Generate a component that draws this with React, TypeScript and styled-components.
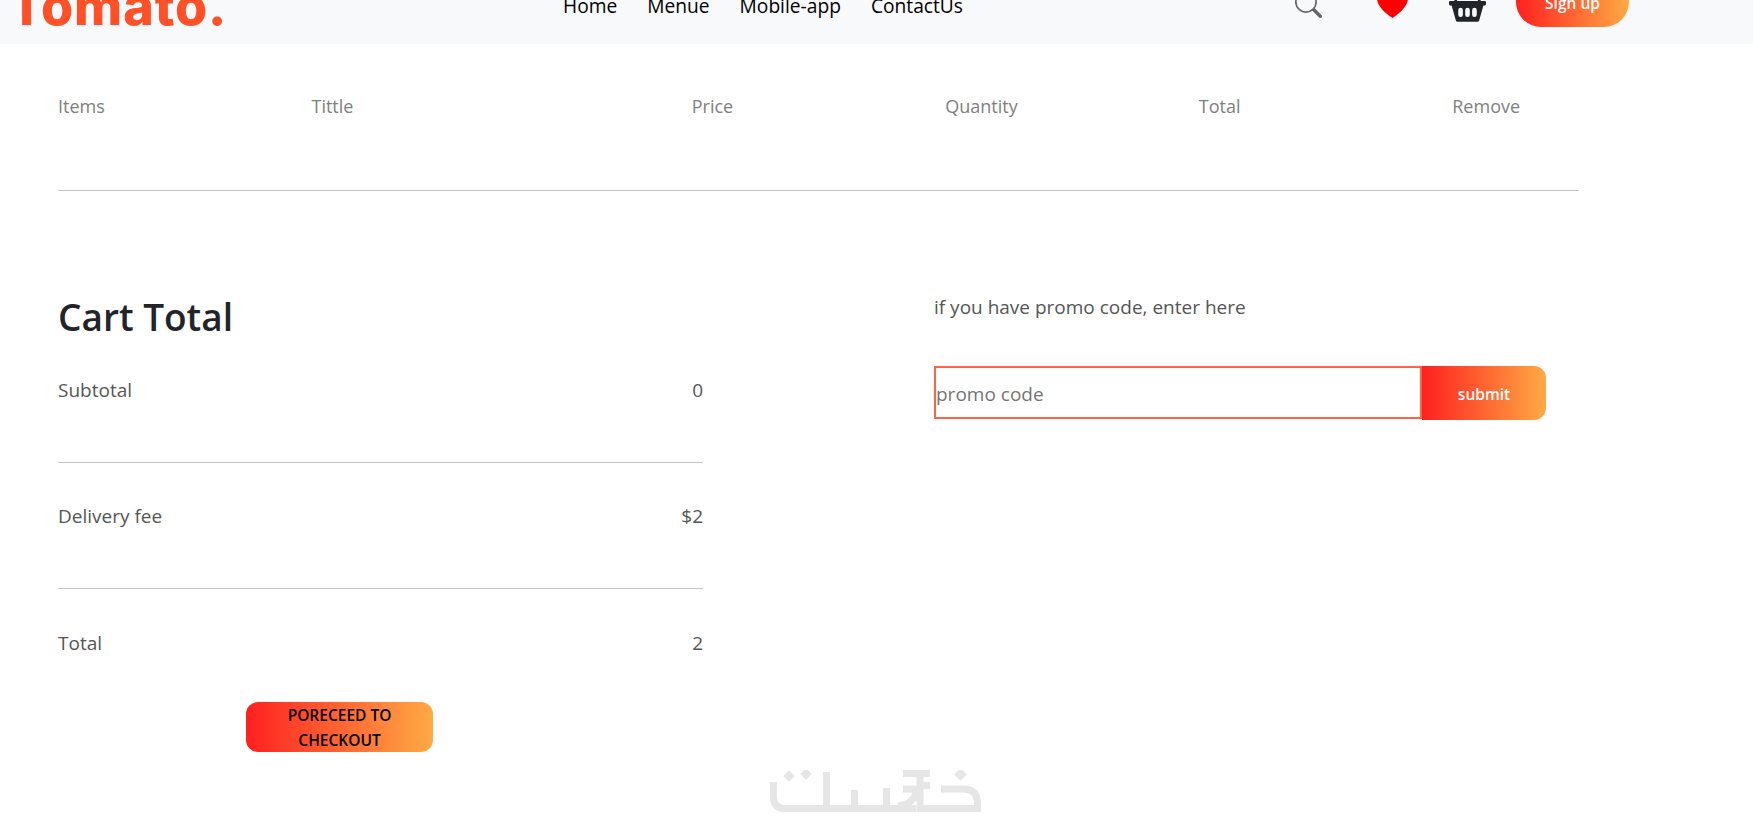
import React from "react";
import styled, { createGlobalStyle } from "styled-components";
import { BsSearch, BsHeartFill, BsBasket2Fill } from "react-icons/bs";

const Global = createGlobalStyle`
  html, body { margin: 0; padding: 0; background: #fff; }
  body { font-family: "Open Sans", "Noto Sans", sans-serif; height: 829px; overflow: hidden; position: relative; }
  * { box-sizing: border-box; }
`;

const grad = "linear-gradient(90deg, #ff2020, #ffaa44)";

const Nav = styled.nav`
  height: 44px;
  background: #f8f9fa;
  overflow: hidden;
  display: flex;
  align-items: flex-end;
  padding-left: 9px;
`;
const Logo = styled.div`
  width: 529px;
  font-family: "Inter", sans-serif;
  font-weight: 800;
  font-size: 52px;
  line-height: 52px;
  letter-spacing: 0.9px;
  color: #ff5027;
  margin-bottom: 11px;
`;
const Links = styled.div`
  display: flex;
  gap: 30px;
  width: 732px;
  margin-left: 25px;
  margin-bottom: 26px;
`;
const NavLink = styled.a`
  font-size: 19.2px;
  line-height: 24px;
  color: #000;
  white-space: nowrap;
`;
const IconSlot = styled.span<{ $w: number; $b: number; $c: string }>`
  display: flex;
  width: ${(p) => p.$w}px;
  margin-bottom: ${(p) => p.$b}px;
  color: ${(p) => p.$c};
`;
const SignUp = styled.button`
  width: 113px;
  height: 52px;
  margin-bottom: 17px;
  border: 0;
  border-radius: 25px;
  background: ${grad};
  color: #fff;
  font-family: inherit;
  font-weight: 600;
  font-size: 15.5px;
  padding: 4px 0 0;
  line-height: 20px;
`;

const Main = styled.main`
  padding: 0 0 0 58px;
  width: 1579px;
`;
const HeadRow = styled.div`
  display: grid;
  grid-template-columns: 1fr 1.5fr 1fr 1fr 1fr 0.5fr;
  padding-top: 50px;
  height: 147px;
  border-bottom: 1px solid #c4c4c4;
  color: #808080;
  font-size: 18px;
  line-height: 24px;
`;
const Bottom = styled.div`
  display: flex;
  margin-top: 104px;
`;
const Left = styled.section`
  width: 645px;
  margin-right: 231px;
`;
const Title = styled.h2`
  margin: 0;
  font-size: 37px;
  line-height: 44px;
  font-weight: 600;
  color: #212529;
`;
const Row = styled.div`
  display: flex;
  justify-content: space-between;
  font-size: 19px;
  line-height: 24px;
  color: #555;
  margin-top: 39px;
`;
const Rule = styled.hr`
  border: 0;
  border-top: 1px solid #c4c4c4;
  margin: 60px 0 0;
`;
const TotalRow = styled(Row)`
  margin-top: 42px;
`;
const DeliveryRow = styled(Row)`
  margin-top: 41px;
`;
const Checkout = styled.button`
  display: block;
  width: 187px;
  height: 50px;
  margin: 47px 0 0 188px;
  border: 0;
  border-radius: 12px;
  background: ${grad};
  color: #000;
  font-family: inherit;
  font-size: 15.5px;
  font-weight: 600;
  line-height: 25px;
  padding: 1px 20px 0;
`;
const Right = styled.section`
  flex: 0 0 612px;
`;
const PromoText = styled.p`
  margin: 0;
  font-size: 19px;
  line-height: 24px;
  color: #555;
`;
const PromoForm = styled.div`
  display: flex;
  align-items: flex-start;
  margin-top: 47px;
`;
const PromoInput = styled.input`
  width: 488px;
  height: 53px;
  border: 2px solid #ff6347;
  outline: 0;
  padding: 2px 0 0;
  font-family: inherit;
  font-size: 19px;
  background: #fff;
  &::placeholder { color: #757575; }
`;
const Submit = styled.button`
  width: 124px;
  height: 54px;
  border: 0;
  border-radius: 0 12px 12px 0;
  background: ${grad};
  color: #fff;
  font-family: inherit;
  font-size: 15.5px;
  font-weight: 600;
  padding: 2px 0 0;
`;
const Watermark = styled.svg`
  position: absolute;
  left: 770px;
  top: 770px;
`;

export default function App() {
  return (
    <>
      <Global />
      <Nav>
        <Logo>Tomato.</Logo>
        <Links>
          <NavLink>Home</NavLink>
          <NavLink>Menue</NavLink>
          <NavLink>Mobile-app</NavLink>
          <NavLink>ContactUs</NavLink>
        </Links>
        <IconSlot $w={82} $b={26} $c="#666"><BsSearch size={27} /></IconSlot>
        <IconSlot $w={72} $b={24} $c="#ff0000"><BsHeartFill size={31} /></IconSlot>
        <IconSlot $w={67} $b={20} $c="#212529"><BsBasket2Fill size={37} /></IconSlot>
        <SignUp>Sign up</SignUp>
      </Nav>
      <Main>
        <HeadRow>
          <span>Items</span>
          <span>Tittle</span>
          <span>Price</span>
          <span>Quantity</span>
          <span>Total</span>
          <span>Remove</span>
        </HeadRow>
        <Bottom>
          <Left>
            <Title>Cart Total</Title>
            <Row><span>Subtotal</span><span>0</span></Row>
            <Rule />
            <DeliveryRow><span>Delivery fee</span><span>$2</span></DeliveryRow>
            <Rule />
            <TotalRow><span>Total</span><span>2</span></TotalRow>
            <Checkout>PORECEED TO CHECKOUT</Checkout>
          </Left>
          <Right>
            <PromoText>if you have promo code, enter here</PromoText>
            <PromoForm>
              <PromoInput placeholder="promo code" />
              <Submit>submit</Submit>
            </PromoForm>
          </Right>
        </Bottom>
      </Main>
      <Watermark width="212" height="43" viewBox="0 0 212 43" fill="none" stroke="#e6e6e6" strokeWidth="7">
        <path d="M3.5 12V27Q3.5 38.5 15 38.5H146" />
        <path d="M153 38.5H207.5V33Q207.5 19 193 19H171" />
        <path d="M56.5 2V38" />
        <path d="M84.5 20V38M116.5 18V38" />
        <path d="M133 3.5H160M150 0V42M150 15.5H160" />
        <path d="M133 19H143Q146 19 146 22Q144 34 128 36" />
        <rect x="15" y="2" width="8" height="8" transform="rotate(45 19 6)" fill="#e6e6e6" stroke="none" />
        <rect x="32" y="0" width="8" height="8" transform="rotate(45 36 4)" fill="#e6e6e6" stroke="none" />
        <rect x="186" y="0" width="9" height="9" transform="rotate(45 190.5 4.5)" fill="#e6e6e6" stroke="none" />
      </Watermark>
    </>
  );
}
